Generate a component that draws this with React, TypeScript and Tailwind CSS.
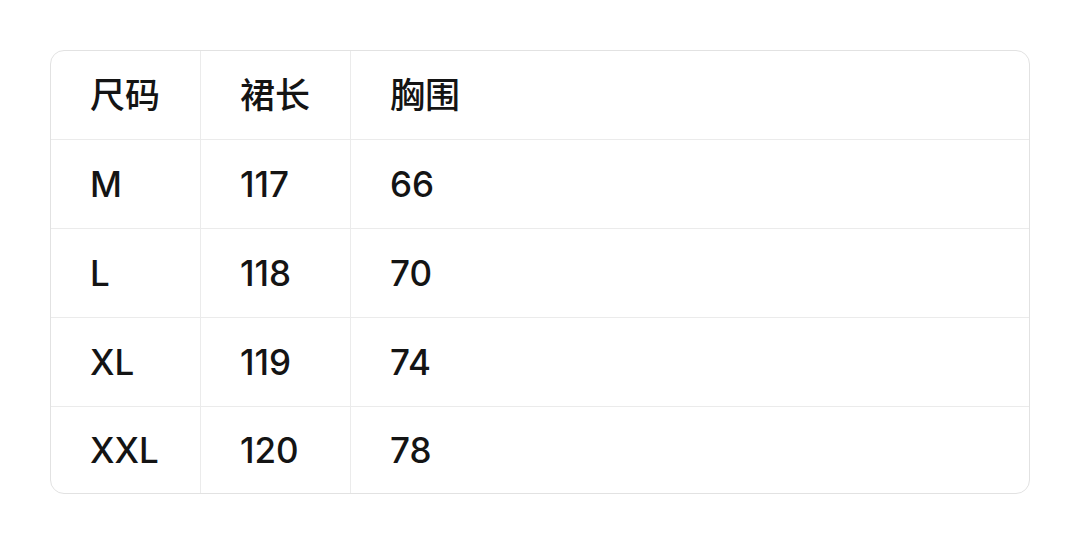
const HEAD = ['尺码', '裙长', '胸围'];
const ROWS = [
  ['M', '117', '66'],
  ['L', '118', '70'],
  ['XL', '119', '74'],
  ['XXL', '120', '78'],
];

export default function App() {
  const all = [HEAD, ...ROWS];
  return (
    <div
      className="w-[1080px] h-[539px] bg-white pt-[50px] pl-[50px]"
      style={{ fontFamily: 'Inter, "Noto Sans CJK SC", sans-serif' }}
    >
      <div className="w-[980px] border border-[#e2e2e2] rounded-[14px] overflow-hidden">
        {all.map((row, i) => (
          <div
            key={i}
            className={`flex ${i < all.length - 1 ? 'h-[89px] border-b border-[#ebebeb]' : 'h-[86px]'}`}
          >
            {row.map((cell, j) => (
              <div
                key={j}
                className={`flex items-center pl-[39px] text-[35px] font-medium text-[#141414] ${
                  j < 2 ? 'w-[150px] border-r border-[#ebebeb]' : 'flex-1'
                }`}
              >
                {cell}
              </div>
            ))}
          </div>
        ))}
      </div>
    </div>
  );
}
